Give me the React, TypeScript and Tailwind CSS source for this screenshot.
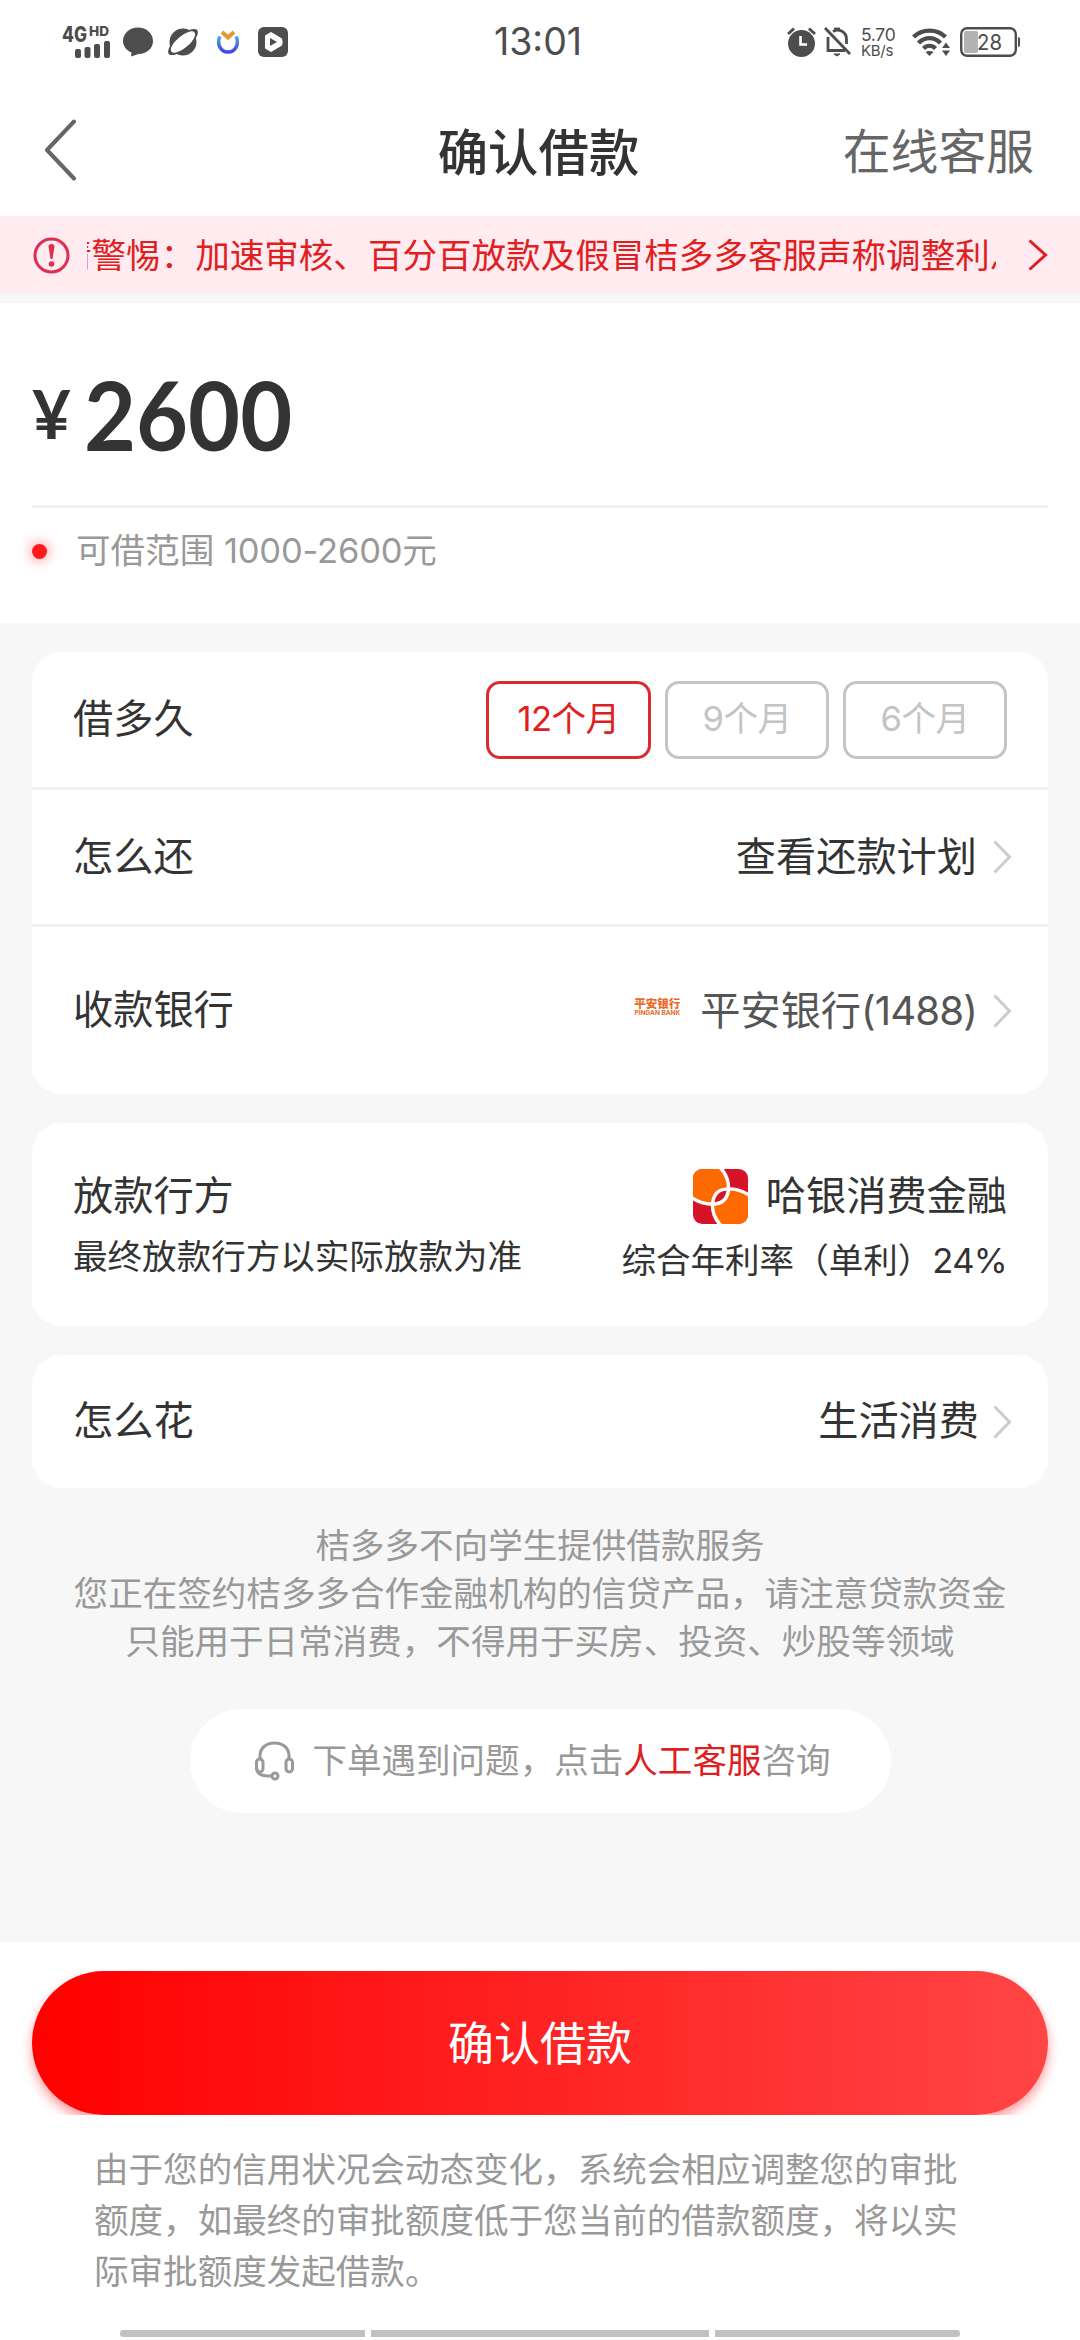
import React from 'react';

const TERMS = [
  { label: '12个月', active: true },
  { label: '9个月', active: false },
  { label: '6个月', active: false },
];

function StatusBar() {
  return (
    <header className="h-[84px] flex-shrink-0 grid grid-cols-[1fr_auto_1fr] items-center text-[#4d4d4d]">
      <div className="flex items-center pl-[62px]">
        <svg className="w-[48px] h-[34px] overflow-visible" viewBox="0 0 48 34" fill="currentColor">
          <text x="0" y="16.500" fontSize="21" fontWeight="800" textLength="25" lengthAdjust="spacingAndGlyphs">4G</text>
          <text x="27" y="11" fontSize="13.500" fontWeight="800" textLength="20" lengthAdjust="spacingAndGlyphs">HD</text>
          <rect x="13" y="24" width="6" height="9" rx="2" />
          <rect x="22.500" y="22" width="6" height="11" rx="2" />
          <rect x="32" y="19" width="6" height="14" rx="2" />
          <rect x="42" y="16" width="6" height="17" rx="2" />
        </svg>
        <svg className="ml-[13px] w-[30px] h-[30px]" viewBox="0 0 30 30" fill="currentColor">
          <path d="M15 0.500C23.500 0.500 30 6.500 30 14C30 21.500 23.500 27 15.500 27L8 29.500L8.500 25.500C3.500 23.500 0 19 0 14C0 6.500 6.500 0.500 15 0.500Z" />
        </svg>
        <svg className="ml-[15px] w-[30px] h-[30px]" viewBox="0 0 30 30">
          <circle cx="15" cy="15" r="13.500" fill="currentColor" />
          <ellipse cx="15" cy="15" rx="18.500" ry="7" transform="rotate(-40 15 15)" fill="currentColor" />
          <ellipse cx="15" cy="15" rx="15" ry="6" transform="rotate(-40 15 15)" fill="#fff" />
        </svg>
        <svg className="ml-[19px] w-[22px] h-[24px]" viewBox="0 0 22 24" fill="none">
          <defs>
            <linearGradient id="ring" x1="0" y1="0" x2="0" y2="1">
              <stop offset="0" stopColor="#4fa8dc" />
              <stop offset="1" stopColor="#4248e0" />
            </linearGradient>
          </defs>
          <path d="M3 6.500C-0.500 13 3 22 11 22C19 22 22.500 13 19 6.500" stroke="url(#ring)" strokeWidth="3.600" />
          <path d="M5 2L11 7.500L17 2" stroke="#e09a2b" strokeWidth="4" />
        </svg>
        <svg className="ml-[19px] w-[30px] h-[30px]" viewBox="0 0 30 30">
          <rect width="30" height="30" rx="6" fill="currentColor" />
          <path d="M8 9L13 6L23 12Q24.500 15 23 18L13 24L8 21Z" fill="#fff" stroke="#fff" strokeWidth="2" strokeLinejoin="round" />
          <path d="M12 11L19 15L12 19Z" fill="currentColor" />
        </svg>
      </div>
      <span className="-ml-[4px] text-[37.500px] leading-none">13:01</span>
      <div className="flex items-center justify-end pr-[60px]">
        <svg className="w-[29px] h-[30px]" viewBox="0 0 29 30" fill="none">
          <circle cx="14.500" cy="16.500" r="13.500" fill="currentColor" />
          <path d="M1 7L7 1.500M28 7L22 1.500" stroke="currentColor" strokeWidth="3" />
          <path d="M13.500 9V17.500H20" stroke="#fff" strokeWidth="2.600" />
        </svg>
        <svg className="ml-[8px] w-[27px] h-[30px]" viewBox="0 0 27 30" fill="none" stroke="currentColor" strokeWidth="2.800">
          <path d="M1 1L26 27" />
          <path d="M4 10V23.500H21M9 4.500C15 1 22.500 5 22.500 12V17" />
          <path d="M10 27H16L13 29Z" fill="currentColor" strokeWidth="1" />
          <path d="M10 2H16" />
        </svg>
        <div className="ml-[10px] w-[38px] flex flex-col text-[17.500px] leading-[17px] tracking-[-0.300px]">
          <span>5.70</span>
          <span className="text-[15px] leading-[15px] whitespace-nowrap">KB/s</span>
        </div>
        <svg className="ml-[13px] w-[38px] h-[28px]" viewBox="0 0 38 28" fill="none" stroke="currentColor" strokeWidth="4.400">
          <path d="M1.500 9C10 0.500 25 0.500 33.500 9" />
          <path d="M6.500 15C13 8.500 22 8.500 28.500 15" />
          <path d="M11.500 20.500C15 17 20 17 23.500 20.500" />
          <path d="M13.500 24C16 22.500 19 22.500 21.500 24L17.500 28Z" fill="currentColor" stroke="none" />
          <path d="M30 20L34 14.500L38 20ZM30 22.500H38L34 28Z" fill="currentColor" stroke="none" />
        </svg>
        <svg className="ml-[10px] w-[60px] h-[30px]" viewBox="0 0 60 30">
          <rect x="1.200" y="1.200" width="54.600" height="27.600" rx="6" fill="none" stroke="currentColor" strokeWidth="2.400" />
          <rect x="4" y="4" width="14" height="22" rx="2" fill="#b3b3b3" />
          <path d="M58 10Q60 10 60 12V18Q60 20 58 20Z" fill="currentColor" />
          <text x="17" y="22.500" fontSize="21" textLength="25" lengthAdjust="spacingAndGlyphs" fill="currentColor">28</text>
        </svg>
      </div>
    </header>
  );
}

function Chevron() {
  return (
    <svg className="ml-[16px] -mr-[5px] w-[19px] h-[34px]" viewBox="0 0 19 34" fill="none" stroke="#cccccc" strokeWidth="3">
      <path d="M1.500 1.500L16.500 17L1.500 32.500" />
    </svg>
  );
}

const PETAL = 'M-3 -3H25C33 4 36 14 34.500 22C33 31 27 34.500 19 34.500C11 34.500 5 33 -3 27Z';

function LenderLogo() {
  return (
    <svg className="w-[55px] h-[55px]" viewBox="0 0 54 54">
      <defs>
        <clipPath id="tile">
          <rect width="54" height="54" rx="9" />
        </clipPath>
        <clipPath id="petal">
          <path d={PETAL} />
        </clipPath>
      </defs>
      <g clipPath="url(#tile)">
        <rect width="54" height="54" fill="#d7132a" />
        <path d={PETAL} fill="#ff6a00" />
        <path d={PETAL} fill="#ff6a00" transform="rotate(180 27 27)" />
        <g clipPath="url(#petal)">
          <path d={PETAL} fill="#d7132a" transform="rotate(180 27 27)" />
        </g>
        <path d={PETAL} fill="none" stroke="#fff" strokeWidth="3.400" />
        <path d={PETAL} fill="none" stroke="#fff" strokeWidth="3.400" transform="rotate(180 27 27)" />
      </g>
    </svg>
  );
}

export default function App() {
  return (
    <div className="w-[1080px] h-[2340px] flex flex-col bg-[#f7f7f7] overflow-hidden text-[#333] text-[40.200px] leading-none font-[Inter,'Noto_Sans_CJK_SC',sans-serif]">
      <div className="flex-shrink-0 bg-white">
        <StatusBar />

        {/* Title bar */}
        <div className="h-[132px] grid grid-cols-[1fr_auto_1fr] items-center pl-[43px] pr-[46px]">
          <svg className="w-[36px] h-[62px]" viewBox="0 0 36 62" fill="none" stroke="#666" strokeWidth="4" strokeLinecap="round" strokeLinejoin="round">
            <path d="M31 2.500L4 31L31 59.500" />
          </svg>
          <h1 className="pt-[6px] text-[50.400px] font-medium">确认借款</h1>
          <span className="pt-[5px] justify-self-end text-[47.800px] text-[#666]">在线客服</span>
        </div>
      </div>

      {/* Notice */}
      <div className="h-[78px] flex-shrink-0 flex items-center pl-[33px] pr-[32px] bg-[#ffebf0] text-[#e02020]">
        <svg className="w-[37px] h-[37px] flex-shrink-0" viewBox="0 0 37 37" fill="none" stroke="#dc3050" strokeWidth="3">
          <circle cx="18.500" cy="18.500" r="16.500" />
          <path d="M15.500 9.500Q15.500 7 18.500 7Q21.500 7 21.500 9.500L19.500 22H17.500Z" fill="#dc3050" stroke="none" />
          <circle cx="18.500" cy="27" r="2.800" fill="#dc3050" stroke="none" />
        </svg>
        <div className="ml-[17px] w-[909px] h-[50px] flex items-center overflow-hidden">
          <p className="-ml-[30px] pt-[2px] text-[34.560px] whitespace-nowrap">请警惕：加速审核、百分百放款及假冒桔多多客服声称调整利息</p>
        </div>
        <svg className="ml-auto w-[20px] h-[32px]" viewBox="0 0 20 32" fill="none" stroke="currentColor" strokeWidth="3">
          <path d="M1.500 1.500L17.500 16L1.500 30.500" />
        </svg>
      </div>

      {/* Amount */}
      <section className="mt-[9px] h-[320px] flex-shrink-0 px-[32px] bg-white">
        <div className="h-[202px] flex items-start pt-[63px] font-[Lato,'Noto_Sans_CJK_SC',sans-serif] font-bold">
          <span className="w-[52px] pt-[14px] text-[67px] leading-none">¥</span>
          <span className="origin-left scale-x-[0.935] text-[96px] leading-none">2600</span>
        </div>
        <div className="h-[3px] bg-[#f2f2f2]" />
        <div className="flex items-center h-[86px] text-[34.560px] text-[#999]">
          <i className="w-[15px] h-[15px] rounded-full bg-[#ff1a1a] shadow-[0_0_12px_3px_#ffb3b3]" />
          <span className="ml-[29px]">可借范围 <span className="tracking-[-0.200px]">1000-2600</span>元</span>
        </div>
      </section>

      <main className="px-[32px] pt-[29px] flex flex-col">
        <section className="h-[442px] rounded-[29px] bg-white">
          <div className="h-[138px] flex items-center px-[41px] border-b-[3px] border-[#f2f2f2]">
            <span>借多久</span>
            <div className="ml-auto flex gap-[14px]">
              {TERMS.map((t) => (
                <button
                  key={t.label}
                  className={
                    t.active
                      ? 'w-[165px] h-[78px] rounded-[14px] border-[3px] border-[#d92b30] text-[34.560px] tracking-[-0.500px] text-[#e02020]'
                      : 'w-[164px] h-[78px] rounded-[14px] border-[3px] border-[#c4c4c4] text-[34.560px] tracking-[-0.500px] text-[#c4c4c4]'
                  }
                >
                  {t.label}
                </button>
              ))}
            </div>
          </div>
          <div className="h-[137px] flex items-center px-[41px] border-b-[3px] border-[#f2f2f2]">
            <span>怎么还</span>
            <span className="ml-auto">查看还款计划</span>
            <Chevron />
          </div>
          <div className="h-[167px] flex items-center px-[41px]">
            <span>收款银行</span>
            <div className="ml-auto mb-[6px] w-[46px] flex flex-col items-center text-[#e8692a] whitespace-nowrap">
              <span className="text-[11.500px] leading-[12px] font-black">平安银行</span>
              <span className="text-[6.500px] leading-[7px] font-bold">PINGAN BANK</span>
            </div>
            <span className="ml-[20px] pt-[2px] text-[#555]">平安银行<span className="tracking-[-0.900px]">(1488)</span></span>
            <Chevron />
          </div>
        </section>

        <section className="mt-[29px] h-[203px] flex justify-between rounded-[29px] bg-white px-[41px] pt-[45px]">
          <div className="flex flex-col pt-[8px]">
            <span>放款行方</span>
            <span className="mt-[24px] text-[34.560px]">最终放款行方以实际放款为准</span>
          </div>
          <div className="flex flex-col items-end">
            <div className="flex items-center h-[56px]">
              <LenderLogo />
              <span className="ml-[18px]">哈银消费金融</span>
            </div>
            <span className="mt-[20px] text-[34.560px]">综合年利率（单利）<span className="tracking-[-0.700px]">24%</span></span>
          </div>
        </section>

        <section className="mt-[29px] h-[133px] flex items-center rounded-[29px] bg-white px-[41px]">
          <span>怎么花</span>
          <span className="ml-auto -mr-[2px]">生活消费</span>
          <Chevron />
        </section>

        <p className="mt-[34px] text-center text-[34.560px] leading-[48px] text-[#999] whitespace-nowrap">
          桔多多不向学生提供借款服务
          <br />
          您正在签约桔多多合作金融机构的信贷产品，请注意贷款资金
          <br />
          只能用于日常消费，不得用于买房、投资、炒股等领域
        </p>

        <div className="mt-[43px] self-center w-[701px] h-[104px] pl-[5px] flex items-center justify-center rounded-full bg-white text-[34.560px] text-[#999]">
          <svg className="mr-[16px] w-[42px] h-[40px]" viewBox="0 0 42 40" fill="none" stroke="#999" strokeWidth="3">
            <path d="M6 18V15C6 7 12 2 20.500 2C29 2 35 7 35 15V18" />
            <rect x="2.500" y="18" width="6.500" height="13" rx="3.200" />
            <rect x="32" y="18" width="6.500" height="13" rx="3.200" />
            <path d="M3 28C3.500 33.500 8 35 17.500 35" />
            <circle cx="21" cy="35" r="3" />
          </svg>
          <span>下单遇到问题，点击<span className="text-[#e02020]">人工客服</span>咨询</span>
        </div>
      </main>

      {/* Bottom bar */}
      <footer className="mt-auto h-[398px] flex-shrink-0 flex flex-col bg-white pt-[29px]">
        <div className="h-[144px] px-[32px] overflow-hidden">
          <button className="w-full h-[144px] rounded-full bg-linear-to-r/srgb from-[#ff0000] to-[#ff4545] text-[46px] text-white shadow-[0_6px_12px_#ff9999]">
            确认借款
          </button>
        </div>
        <p className="mt-[29px] pl-[94px] text-[34.560px] leading-[51px] text-[#999] whitespace-nowrap">
          由于您的信用状况会动态变化，系统会相应调整您的审批
          <br />
          额度，如最终的审批额度低于您当前的借款额度，将以实
          <br />
          际审批额度发起借款。
        </p>
        <div className="mt-auto mb-[3px] self-center flex gap-[6px]">
          <i className="w-[245px] h-[7px] rounded-l-full bg-[#c1c1c1]" />
          <i className="w-[338px] h-[7px] bg-[#c1c1c1]" />
          <i className="w-[245px] h-[7px] rounded-r-full bg-[#c1c1c1]" />
        </div>
      </footer>
    </div>
  );
}
